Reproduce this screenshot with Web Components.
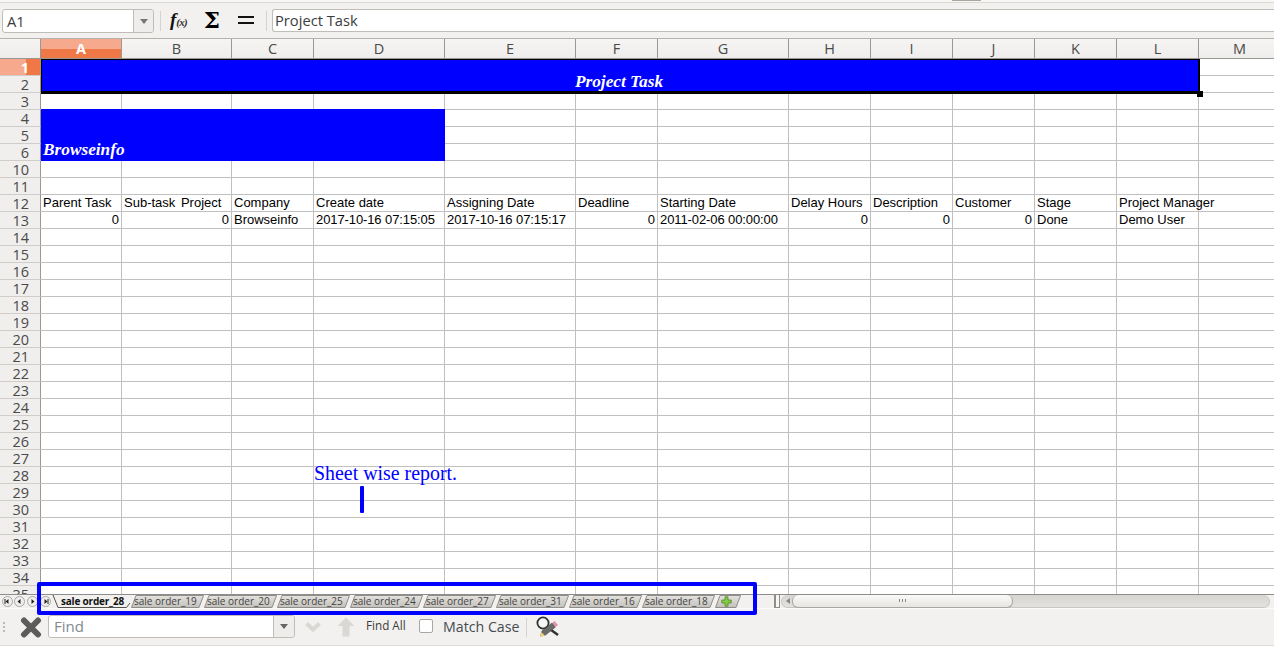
<!DOCTYPE html>
<html>
<head>
<meta charset="utf-8">
<style>
    html, body { margin: 0; height: 100%; overflow: hidden; background: #f2f1ef; }
    body { position: relative; display: flex; flex-direction: column; height: 646px; font-family: "Open Sans", sans-serif; }
</style>
</head>
<body>
<formula-bar cell="A1" value="Project Task"></formula-bar>
<sheet-grid></sheet-grid>
<tab-bar active="sale order_28" tabs="sale order_19,sale order_20,sale order_25,sale order_24,sale order_27,sale order_31,sale order_16,sale order_18"></tab-bar>
<find-bar></find-bar>
<sheet-note text="Sheet wise report."></sheet-note>

<script>
class FormulaBar extends HTMLElement {
    constructor() {
        super();
        const shadow = this.attachShadow({ mode: 'open' });
        shadow.innerHTML = `
            <style>
                :host {
                    display: block;
                    flex: none;
                    height: 39px;
                    box-sizing: border-box;
                    border-bottom: 1px solid #b5b3ae;
                    background: #f2f1ef;
                    font-family: "Open Sans", sans-serif;
                }
                .top {
                    height: 2px;
                    background: #f7f6f5;
                    border-bottom: 1px solid #dcdad5;
                }
                .top i {
                    display: block;
                    width: 29px;
                    height: 1px;
                    margin-left: 952px;
                    background: #a9a89f;
                }
                .row {
                    display: flex;
                    align-items: center;
                    height: 24px;
                    margin-top: 6px;
                    padding-left: 2px;
                }
                .name {
                    width: 150px;
                    height: 22px;
                    display: flex;
                    border: 1px solid #c0bdb8;
                    border-radius: 3px;
                    background: #fff;
                    font-size: 14.7px;
                    color: #3c3c3c;
                }
                .name span {
                    flex: 1;
                    padding-left: 4px;
                    line-height: 22px;
                }
                .name b {
                    width: 19px;
                    border-left: 1px solid #c0bdb8;
                    background: #eeedeb;
                    border-radius: 0 3px 3px 0;
                    display: flex;
                    align-items: center;
                    justify-content: center;
                }
                .name i {
                    width: 0; height: 0;
                    border: 4px solid transparent;
                    border-top: 5px solid #777;
                    border-bottom: 0;
                }
                .sep { width: 1px; height: 20px; background: #d5d3ce; flex: none; }
                .fx {
                    font: italic bold 19px/24px "Liberation Serif", serif;
                    color: #111;
                    width: 24px;
                    margin-left: 9px;
                    white-space: nowrap;
                }
                .fx small { font-size: 11px; letter-spacing: -0.8px; color: #333; }
                .sum {
                    font: bold 23px/24px "DejaVu Serif", serif;
                    color: #000;
                    margin-left: 8px;
                    margin-top: -2px;
                    width: 20px;
                    text-align: center;
                }
                .eq {
                    width: 16px;
                    height: 4px;
                    margin: -2px 12px 0 16px;
                    border-top: 2px solid #111;
                    border-bottom: 2px solid #111;
                }
                .input {
                    flex: 1;
                    height: 21px;
                    align-self: flex-start;
                    margin-left: 5px;
                    border: 1px solid #c0bdb8;
                    border-right: 0;
                    border-radius: 3px 0 0 3px;
                    background: #fff;
                    padding-left: 2px;
                    font-size: 14.7px;
                    line-height: 21px;
                    color: #3c3c3c;
                }
            </style>
            <div class="top"><i></i></div>
            <div class="row">
                <div class="name"><span>${this.getAttribute('cell')}</span><b><i></i></b></div>
                <div class="sep" style="margin-left:6px"></div>
                <div class="fx">f<small>(x)</small></div>
                <div class="sum">&Sigma;</div>
                <div class="eq"></div>
                <div class="sep"></div>
                <div class="input">${this.getAttribute('value')}</div>
            </div>
        `;
    }
}

const COLS = [
    ['A', 81], ['B', 110], ['C', 82], ['D', 131], ['E', 131], ['F', 82], ['G', 131],
    ['H', 82], ['I', 82], ['J', 82], ['K', 82], ['L', 82], ['M', 82]
];
const ROWS = [1, 2, 3, 4, 5, 6, 10, 11, 12, 13];
for (let r = 14; r <= 35; r++) ROWS.push(r);

const HEAD = ['Parent Task', 'Sub-task Project', 'Company', 'Create date', 'Assigning Date', 'Deadline',
    'Starting Date', 'Delay Hours', 'Description', 'Customer', 'Stage', 'Project Manager'];
const VALS = ['0', '0', 'Browseinfo', '2017-10-16 07:15:05', '2017-10-16 07:15:17', '0',
    '2011-02-06 00:00:00', '0', '0', '0', 'Done', 'Demo User'];

class SheetGrid extends HTMLElement {
    constructor() {
        super();
        const shadow = this.attachShadow({ mode: 'open' });
        const colDefs = COLS.map(c => c[1] + 'px').join(' ');

        let html = '<div class="corner"></div>';
        COLS.forEach((c, i) => {
            html += `<div class="ch${i === 0 ? ' on' : ''}">${c[0]}</div>`;
        });

        ROWS.forEach((r, ri) => {
            html += `<div class="rh${r === 1 ? ' on' : ''}" style="grid-row:${ri + 2};grid-column:1">${r}</div>`;
            COLS.forEach((c, ci) => {
                // merged areas are placed separately below
                if (ri < 2 && ci < 12) return;
                if (ri >= 3 && ri <= 5 && ci < 4) return;
                let text = '';
                let cls = 'cell';
                if (r === 12 && HEAD[ci]) {
                    text = HEAD[ci];
                    if (ci === 1) cls += ' wide';
                }
                if (r === 13 && VALS[ci]) {
                    text = VALS[ci];
                    if (text === '0') cls += ' num';
                    if (text.startsWith('20')) cls += ' date';
                }
                html += `<div class="${cls}" style="grid-row:${ri + 2};grid-column:${ci + 2}">${text}</div>`;
            });
        });

        shadow.innerHTML = `
            <style>
                :host {
                    display: block;
                    height: 555px;
                    overflow: hidden;
                    background: #fff;
                    flex: none;
                }
                .grid {
                    display: grid;
                    grid-template-columns: 41px ${colDefs};
                    grid-template-rows: 20px repeat(${ROWS.length}, 17px);
                    font: 13px "Liberation Sans", sans-serif;
                    color: #000;
                }
                .corner {
                    background: linear-gradient(#f5f4f2, #eeedeb);
                    border-right: 1px solid #9a9894;
                    border-bottom: 1px solid #9a9894;
                }
                .ch {
                    background: linear-gradient(#f6f5f3, #eeedeb);
                    border-right: 1px solid #9a9894;
                    border-bottom: 1px solid #9a9894;
                    text-align: center;
                    font: 14.5px/20px "Open Sans", sans-serif;
                    color: #4a4a4a;
                }
                .ch.on {
                    background: linear-gradient(#f6a98c 50%, #f07846 50%);
                    color: #fff;
                    font-weight: 700;
                }
                .rh {
                    background: #f0efed;
                    border-right: 1px solid #9a9894;
                    border-bottom: 1px solid #cfcdc9;
                    font: 14.5px/17px "Open Sans", sans-serif;
                    color: #4a4a4a;
                    text-align: right;
                    padding-right: 11px;
                }
                .rh.on {
                    background: linear-gradient(90deg, #f6a98c 65%, #f07846 65%);
                    color: #fff;
                    font-weight: 700;
                }
                .cell {
                    border-right: 1px solid #c0c0c0;
                    border-bottom: 1px solid #c0c0c0;
                    padding: 0 2px;
                    line-height: 16px;
                    white-space: nowrap;
                    min-width: 0;
                    box-sizing: border-box;
                }
                .num { text-align: right; }
                .date { letter-spacing: -0.1px; }
                .wide { word-spacing: 2px; }
                .merge {
                    background: #00f;
                    color: #fff;
                    font: italic bold 17.3px "Liberation Serif", serif;
                    display: flex;
                    box-sizing: border-box;
                }
                .title {
                    grid-row: 2 / span 2;
                    grid-column: 2 / span 12;
                    margin: 0 -1px -1px 0;
                    padding-right: 2px;
                    justify-content: center;
                    align-items: flex-end;
                    border: 2px solid #000;
                    border-width: 1px 2px 3px 1px;
                    line-height: 18px;
                    position: relative;
                }
                .title::after {
                    content: "";
                    position: absolute;
                    right: -5px;
                    bottom: -6px;
                    width: 6px;
                    height: 6px;
                    background: #000;
                }
                .brand {
                    grid-row: 5 / span 3;
                    grid-column: 2 / span 4;
                    margin-top: -1px;
                    align-items: flex-end;
                    padding: 0 0 1px 2px;
                    line-height: 20px;
                }
            </style>
            <div class="grid">
                ${html}
                <div class="merge brand">Browseinfo</div>
                <div class="merge title">Project Task</div>
            </div>
        `;
    }
}

class TabBar extends HTMLElement {
    constructor() {
        super();
        const shadow = this.attachShadow({ mode: 'open' });
        const nav = [0, 1, 2, 3].map(i => {
            const arrow = i < 2 ? '6.5,3 3.5,5.5 6.5,8' : '4.5,3 7.5,5.5 4.5,8';
            const bar = i === 0 ? '<path d="M3 3v5" stroke="#222"/>' : i === 3 ? '<path d="M8 3v5" stroke="#222"/>' : '';
            return `<svg width="11" height="11" viewBox="0 0 11 11"><circle cx="5.5" cy="5.5" r="5" fill="#f0efed" stroke="#a9a7a3"/><polygon points="${arrow}" fill="#222"/>${bar}</svg>`;
        }).join('');
        const shape = (w, dark) => `<svg class="shape" width="${w}" height="13" viewBox="0 0 ${w} 13"><polygon points="0.5,12.5 5,0.5 ${w - 0.5},0.5 ${w - 5},12.5" fill="url(#tabfill)" stroke="${dark}"/></svg>`;
        const tabs = this.getAttribute('tabs').split(',').map(t => `<div class="tab">${shape(73, '#8f8d89')}<span>${t}</span></div>`).join('');
        shadow.innerHTML = `
            <style>
                :host {
                    display: block;
                    height: 14px;
                    flex: none;
                    background: #f2f1ef;
                    border-top: 1px solid #8f8d89;
                    box-sizing: border-box;
                    font: 10px "Open Sans", sans-serif;
                    color: #3c3c3c;
                }
                .bar { display: flex; height: 13px; align-items: stretch; }
                .nav { display: flex; gap: 1.7px; align-items: center; width: 52px; padding-left: 1.5px; box-sizing: border-box; flex: none; }
                .nav svg { flex: none; }
                .tab {
                    width: 73px;
                    flex: none;
                    position: relative;
                    line-height: 12px;
                    white-space: nowrap;
                    color: #444;
                }
                .tab span { position: relative; padding-left: 3px; }
                .shape { position: absolute; left: 0; top: 0; }
                .tab.active { width: 79px; color: #111; font-weight: 700; }
                .tab.active span { padding-left: 9px; letter-spacing: -0.2px; }
                .add {
                    width: 26px;
                    flex: none;
                    position: relative;
                    display: flex;
                    align-items: center;
                    justify-content: center;
                }
                .add .plus { position: relative; margin-left: -3px; }
                .rest { flex: 1; }
                .split {
                    width: 6px;
                    flex: none;
                    background: #f7f6f4;
                    border: 1px solid #8f8d89;
                    border-top: 0;
                    border-left-width: 2px;
                    box-sizing: border-box;
                }
                .scroll {
                    flex: none;
                    width: 489px;
                    margin: 0 4px 0 1px;
                    display: flex;
                    align-items: center;
                    background: linear-gradient(#d6d5d1, #e2e1dd);
                    border: 1px solid #c9c7c3;
                    border-top: 0;
                    border-radius: 7px;
                    box-sizing: border-box;
                }
                .scroll svg { margin-left: 3px; flex: none; }
                .thumb {
                    width: 221px;
                    height: 13px;
                    background: linear-gradient(#fafaf9, #e6e5e2);
                    border: 1px solid #a9a7a3;
                    border-top: 0;
                    border-radius: 6px;
                    box-sizing: border-box;
                    display: flex;
                    align-items: center;
                    justify-content: center;
                    gap: 2px;
                }
                .thumb i { width: 1px; height: 3px; background: #888; }
            </style>
            <svg width="0" height="0" style="position:absolute">
                <defs><linearGradient id="tabfill" x1="0" y1="0" x2="0" y2="1"><stop offset="0" stop-color="#e4e2de"/><stop offset="1" stop-color="#c4c1bc"/></linearGradient></defs>
            </svg>
            <div class="bar">
                <div class="nav">${nav}</div>
                <div class="tab active">
                    <svg class="shape" width="79" height="13" viewBox="0 0 79 13"><path d="M1 0l5 12.5h68.5L78 8" fill="#f2f1ef" stroke="#55534f"/></svg>
                    <span>${this.getAttribute('active')}</span>
                </div>
                ${tabs}
                <div class="add">
                    ${shape(26, '#8f8d89')}
                    <svg class="plus" width="11" height="11" viewBox="0 0 11 11"><path d="M4 .8h3V4h3.2v3H7v3.2H4V7H.8V4H4z" fill="#86c94a" stroke="#4f8a22" stroke-width=".8"/></svg>
                </div>
                <div class="rest"></div>
                <div class="split"></div>
                <div class="scroll">
                    <svg width="7" height="8" viewBox="0 0 7 8"><polygon points="5,1 1,4 5,7" fill="#888"/></svg>
                    <div class="thumb"><i></i><i></i><i></i></div>
                </div>
            </div>
        `;
    }
}

class FindBar extends HTMLElement {
    constructor() {
        super();
        const shadow = this.attachShadow({ mode: 'open' });
        shadow.innerHTML = `
            <style>
                :host {
                    display: block;
                    flex: 1;
                    box-sizing: border-box;
                    background: #f2f1ef;
                    border-top: 1px solid #fbfbfa;
                    font: 14px "Open Sans", sans-serif;
                    color: #3c3c3c;
                }
                .row {
                    display: flex;
                    align-items: center;
                    height: 36px;
                    border-bottom: 1px solid #dcdad5;
                }
                svg { flex: none; }
                .grip { width: 4px; height: 10px; margin-left: 3px; border-left: 2px dotted #bbb; box-sizing: border-box; flex: none; }
                .close { margin-left: 13px; }
                .field {
                    width: 245px;
                    height: 21px;
                    margin: -1px 0 0 6px;
                    display: flex;
                    flex: none;
                    border: 1px solid #c0bdb8;
                    border-radius: 3px;
                    background: #fff;
                    font-size: 15px;
                    color: #808a90;
                }
                .field span { flex: 1; padding-left: 5px; line-height: 21px; }
                .field b {
                    width: 20px;
                    border-left: 1px solid #c0bdb8;
                    background: #eeedeb;
                    border-radius: 0 3px 3px 0;
                    display: flex;
                    align-items: center;
                    justify-content: center;
                }
                .field i { width: 0; height: 0; border: 4px solid transparent; border-top: 5px solid #666; border-bottom: 0; }
                .all { font-size: 11.7px; margin: -4px 0 0 11px; width: 40px; flex: none; white-space: nowrap; }
                .check { width: 12px; height: 12px; border: 1px solid #a9a7a3; border-radius: 2px; background: #fff; margin: -2px 0 0 13px; flex: none; }
                .case { margin: -2px 0 0 10px; width: 76px; flex: none; font-size: 14.2px; white-space: nowrap; color: #444c52; }
                .sep { width: 1px; height: 19px; background: #d5d3ce; margin: 0 9px 0 7px; flex: none; }
            </style>
            <div class="row">
                <div class="grip"></div>
                <svg class="close" width="22" height="21" viewBox="0 0 22 21">
                    <path d="M4 3.5l14 14M18 3.5l-14 14" stroke="#5c5c5a" stroke-width="6" stroke-linecap="round"/>
                </svg>
                <div class="field"><span>Find</span><b><i></i></b></div>
                <svg style="margin-left:9px" width="18" height="12" viewBox="0 0 18 12"><path d="M2.5 2.5L9 8.5l6.500-6" fill="none" stroke="#d9d8d4" stroke-width="4"/></svg>
                <svg style="margin-left:15px" width="18" height="20" viewBox="0 0 18 20"><path d="M9 .5L17.500 9h-5v10.500h-7V9h-5z" fill="#d9d8d4"/></svg>
                <span class="all">Find All</span>
                <div class="check"></div>
                <span class="case">Match Case</span>
                <div class="sep"></div>
                <svg width="24" height="22" viewBox="0 0 24 22">
                    <circle cx="7" cy="7" r="5.600" fill="#f4f7f8" stroke="#333" stroke-width="1.800"/>
                    <path d="M11 11l11 8" stroke="#333" stroke-width="2.600"/>
                    <path d="M4.500 20l1.500-5 10-8 3.500 4-10 8z" fill="#6a6a68" stroke="#444" stroke-width=".6"/>
                    <path d="M16.500 6.500l2-1.500 3.500 4-2.500 2z" fill="#e58fb0"/>
                    <path d="M4 21l1-5 4 3.500z" fill="#ecd27e"/>
                </svg>
            </div>
        `;
    }
}

// annotations drawn over the screenshot: caption, tick and the box round the tabs
class SheetNote extends HTMLElement {
    constructor() {
        super();
        const shadow = this.attachShadow({ mode: 'open' });
        shadow.innerHTML = `
            <style>
                :host { display: contents; }
                .caption {
                    position: absolute;
                    left: 314px;
                    top: 461px;
                    font: 19.9px/24px "Liberation Serif", serif;
                    color: #00f;
                    white-space: nowrap;
                }
                .tick {
                    position: absolute;
                    left: 360px;
                    top: 486px;
                    width: 4px;
                    height: 27px;
                    border-radius: 1px;
                    background: #00f;
                }
                .box {
                    position: absolute;
                    left: 37px;
                    top: 582px;
                    width: 720px;
                    height: 33px;
                    border: 4px solid #00f;
                    border-radius: 2px;
                    box-sizing: border-box;
                }
            </style>
            <div class="caption">${this.getAttribute('text')}</div>
            <div class="tick"></div>
            <div class="box"></div>
        `;
    }
}

customElements.define('formula-bar', FormulaBar);
customElements.define('sheet-grid', SheetGrid);
customElements.define('tab-bar', TabBar);
customElements.define('find-bar', FindBar);
customElements.define('sheet-note', SheetNote);
</script>
</body>
</html>
